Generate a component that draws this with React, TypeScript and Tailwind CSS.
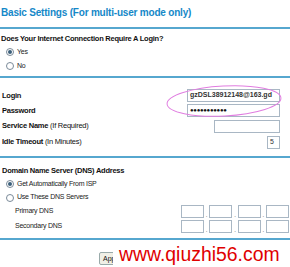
import React from "react";

const Radio = ({ checked }: { checked?: boolean }) => (
  <span className="relative inline-flex h-[8px] w-[8px] shrink-0 items-center justify-center rounded-full border border-[#7a8a99] bg-white">
    {checked && <span className="h-[4px] w-[4px] rounded-full bg-[#3b5f7a]" />}
  </span>
);

const Box = ({ w, children }: { w: string; children?: React.ReactNode }) => (
  <div className={`flex h-[13px] items-center border border-[#a9b7c4] bg-white px-[2px] text-[7px] text-[#333] ${w}`}>{children}</div>
);

const Line = () => <div className="h-[2px] w-full bg-[#56a7cf]" />;

export default function App() {
  return (
    <div className="relative h-[267px] w-[290px] overflow-hidden bg-white font-['Liberation_Sans',Arial,sans-serif] text-[#111]">
      <div className="flex flex-col">
        <div className="pl-[1px] pt-[6px] text-[10px] font-bold leading-[13px] tracking-[-0.2px] text-[#1588c8]">Basic Settings (For multi-user mode only)</div>
        <div className="mt-[8px]"><Line /></div>
        <div className="mt-[5px] pl-[1px] text-[7.5px] font-bold leading-[9px] tracking-[-0.25px]">Does Your Internet Connection Require A Login?</div>
        <div className="mt-[2px] flex h-[14px] items-center gap-[3px] pl-[6px] text-[7px] tracking-[-0.25px] text-[#222]"><Radio checked />Yes</div>
        <div className="flex h-[14px] items-center gap-[3px] pl-[6px] text-[7px] tracking-[-0.25px] text-[#222]"><Radio />No</div>
        <div className="mt-[3px]"><Line /></div>
        <div className="mt-[10px] flex h-[15px] items-center justify-between pl-[2px] pr-[10px] text-[7.5px] font-bold tracking-[-0.25px]">
          <span>Login</span>
          <Box w="w-[93px]"><span className="tracking-normal">gzDSL38912148@163.gd</span></Box>
        </div>
        <div className="flex h-[15px] items-center justify-between pl-[2px] pr-[10px] text-[7.5px] font-bold tracking-[-0.25px]">
          <span>Password</span>
          <Box w="w-[93px]"><span className="text-[6px] tracking-[-0.3px] text-[#111]">●●●●●●●●●●●</span></Box>
        </div>
        <div className="flex h-[16px] items-center justify-between pl-[2px] pr-[10px] text-[7.5px] font-bold tracking-[-0.25px]">
          <span>Service Name <span className="font-normal">(If Required)</span></span>
          <Box w="w-[66px]" />
        </div>
        <div className="flex h-[16px] items-center justify-between pl-[2px] pr-[10px] text-[7.5px] font-bold tracking-[-0.25px]">
          <span>Idle Timeout <span className="font-normal">(In Minutes)</span></span>
          <Box w="w-[13px]"><span className="font-normal">5</span></Box>
        </div>
        <div className="mt-[6px]"><Line /></div>
        <div className="mt-[8px] pl-[2px] text-[7.5px] font-bold leading-[9px] tracking-[-0.25px]">Domain Name Server (DNS) Address</div>
        <div className="mt-[2px] flex h-[14px] items-center gap-[3px] pl-[6px] text-[7px] tracking-[-0.25px] text-[#222]"><Radio checked />Get Automatically From ISP</div>
        <div className="flex h-[13px] items-center gap-[3px] pl-[6px] text-[7px] tracking-[-0.25px] text-[#222]"><Radio />Use These DNS Servers</div>
        {["Primary DNS", "Secondary DNS"].map((l) => (
          <div key={l} className="flex h-[15px] items-center justify-between pl-[15px] pr-[1px] text-[7px] tracking-[-0.25px] text-[#222]">
            <span>{l}</span>
            <div className="flex items-end gap-[2px]">
              <Box w="w-[23px]" /><span className="text-[6px] leading-[6px]">.</span>
              <Box w="w-[23px]" /><span className="text-[6px] leading-[6px]">.</span>
              <Box w="w-[23px]" /><span className="text-[6px] leading-[6px]">.</span>
              <Box w="w-[23px]" />
            </div>
          </div>
        ))}
        <div className="mt-[4px]"><Line /></div>
        <div className="mt-[12px] flex pl-[99px]">
          <div className="flex h-[13px] items-center rounded-[2px] border border-[#9aa] bg-[#f0efe6] px-[3px] text-[7px] leading-[9px]">Apply</div>
        </div>
      </div>
      <div className="absolute left-[113px] top-[243px] flex h-[24px] w-[177px] items-center bg-white pl-[6px] font-['Liberation_Sans',Arial,sans-serif] text-[19.4px] leading-none text-[#e00000]">
        www.qiuzhi56.com
      </div>
      <svg className="pointer-events-none absolute left-0 top-0" width="290" height="267">
        <ellipse cx="224" cy="101" rx="57" ry="15" fill="none" stroke="#e07de0" strokeWidth="1" transform="rotate(-3 224 101)" />
      </svg>
    </div>
  );
}
